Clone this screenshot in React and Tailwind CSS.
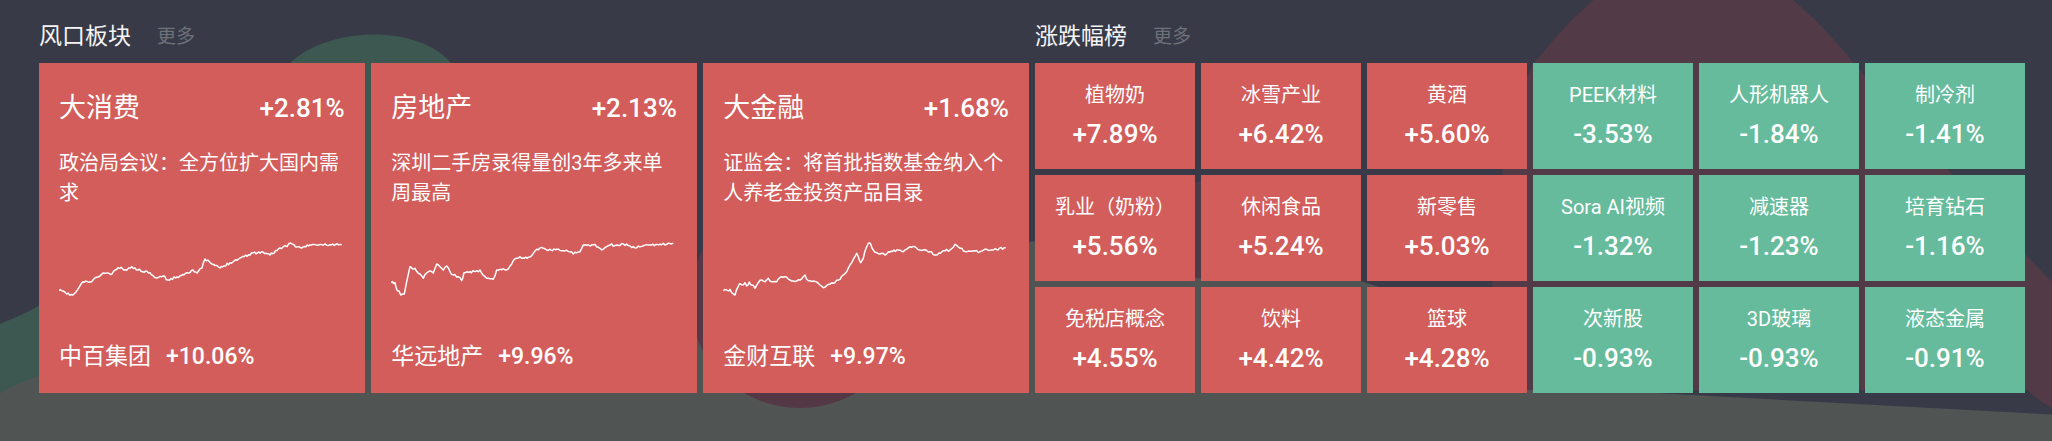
import React from 'react';

// sparkline anchor points, local to a 284x60 box
const lines = {
  a: [[0,50.7],[4,51],[7.7,54],[14,55],[17,52],[24,41.7],[31,42],[39,37],[44,33],[53,34],[59,27.7],[68,30],[73,26.7],[79,30],[91,32.7],[98,38],[104,36],[109,40],[118,37],[128,32.7],[134,30],[138,33],[143,28],[146,19],[153,24],[161,28],[171,22.7],[181,18],[194,13],[204,12],[211,15],[221,8],[228,6.7],[231.7,3],[238,7],[244,7],[251,5],[282.7,4.7]],
  b: [[0,42.7],[4,42.7],[6.3,50.7],[8,51],[9.7,55],[13.3,54],[15.7,41.7],[19,26.7],[21.7,29],[24,28.3],[27.3,33.3],[32.3,38.3],[35.7,33],[40.7,31.7],[42.3,33],[45.7,24],[49,26.7],[52.3,30],[55.7,26],[59,31.7],[62.3,35],[67.3,36.7],[70.7,40.7],[73,32.7],[79,31.7],[87.3,31.7],[89,30],[92,35],[95.7,38.3],[102.3,39.3],[105.7,30],[109,29.3],[115.7,30],[122.3,20.7],[129,16.7],[132,18],[137.3,17.3],[142.3,13.3],[145.7,9.3],[152.3,8.3],[155.7,10],[165.7,9.3],[172.3,10.7],[179,11.7],[182.3,14],[189,11.7],[192.3,5],[199,6],[202.3,4.7],[209,8.3],[212.3,9.3],[219,5],[225.7,5],[232.3,4],[239,6],[245.7,7.7],[252.3,5.7],[259,5],[269,4.3],[275.7,4.3],[282.3,3.3]],
  c: [[0.3,50.7],[6.3,50.7],[7,49.3],[8.7,52.7],[12,55],[16.3,44],[18.7,45],[22,42.7],[23.7,46],[26.3,42],[28.7,45],[32,48.3],[35.3,42.7],[38.7,40],[42,41.7],[45.3,38.3],[48.7,41.7],[53.7,41.7],[58.7,36.7],[63.7,37.3],[67,40],[70.3,41],[77,40],[82,35],[83.7,39.3],[90.3,41],[95.3,43.3],[100.3,47.7],[105.3,44.3],[110.3,43.3],[115.3,40],[120.3,35],[123.7,31.7],[127,25],[130.3,19.3],[133.7,13.3],[135.3,16.7],[137.7,22.7],[140.3,18.3],[143,8.3],[145.3,3.3],[147.7,4],[150.3,10],[153.7,12.7],[158.7,13.3],[162,15],[165.3,11.7],[173.7,10],[180.3,11.7],[187,6.7],[193.7,8.3],[200.3,10],[207,11.7],[213,15],[220.3,10.7],[227,10],[232,4.3],[237,8.3],[243.7,11.7],[250.3,10.7],[257,11.7],[263.7,9.3],[270.3,10],[282.7,7.7]],
};

// add a bit of jitter between anchors so it reads like tick data
const jag = (anchors, seed) => {
  let s = seed;
  const rnd = () => {
    s = (s * 16807) % 2147483647;
    return s / 2147483647;
  };
  const pts = [];
  for (let i = 0; i < anchors.length - 1; i++) {
    const [x0, y0] = anchors[i];
    const [x1, y1] = anchors[i + 1];
    const n = Math.max(1, Math.round((x1 - x0) / 1.5));
    for (let k = 0; k < n; k++) {
      const t = k / n;
      const dy = k === 0 ? 0 : (rnd() - 0.5) * 2.4;
      pts.push([x0 + (x1 - x0) * t, y0 + (y1 - y0) * t + dy]);
    }
  }
  pts.push(anchors[anchors.length - 1]);
  return 'M' + pts.map((p) => p[0].toFixed(1) + ' ' + p[1].toFixed(1)).join('L');
};

const sectors = [
  { name: '大消费', pct: '+2.81%', desc: '政治局会议：全方位扩大国内需求', stock: '中百集团', stockPct: '+10.06%', path: jag(lines.a, 11) },
  { name: '房地产', pct: '+2.13%', desc: '深圳二手房录得量创3年多来单周最高', stock: '华远地产', stockPct: '+9.96%', path: jag(lines.b, 29) },
  { name: '大金融', pct: '+1.68%', desc: '证监会：将首批指数基金纳入个人养老金投资产品目录', stock: '金财互联', stockPct: '+9.97%', path: jag(lines.c, 47) },
];

const tiles = [
  ['植物奶', '+7.89%'], ['冰雪产业', '+6.42%'], ['黄酒', '+5.60%'], ['PEEK材料', '-3.53%'], ['人形机器人', '-1.84%'], ['制冷剂', '-1.41%'],
  ['乳业（奶粉）', '+5.56%'], ['休闲食品', '+5.24%'], ['新零售', '+5.03%'], ['Sora AI视频', '-1.32%'], ['减速器', '-1.23%'], ['培育钻石', '-1.16%'],
  ['免税店概念', '+4.55%'], ['饮料', '+4.42%'], ['篮球', '+4.28%'], ['次新股', '-0.93%'], ['3D玻璃', '-0.93%'], ['液态金属', '-0.91%'],
];

const Heading = ({ title }) => (
  <div className="flex items-center pt-[22px] pb-[11px] leading-[30px]">
    <span className="text-[23px] text-[#f4f4f6]">{title}</span>
    <span className="ml-[26px] text-[19px] text-[#6e7179]">更多</span>
  </div>
);

const Backdrop = () => (
  <svg className="absolute inset-0" width="2052" height="441" viewBox="0 0 2052 441">
    <rect width="2052" height="441" fill="#383a47" />
    <path d="M-20 330 C100 300 220 140 290 63 C330 25 420 25 451 63 C560 170 640 300 690 400 L-20 400 Z" fill="#3d5751" />
    <path d="M-10 400 C30 370 150 330 370 360 C600 390 800 260 1050 240 C1250 225 1450 300 1600 390 L2060 415 L2060 441 L-10 441 Z" fill="#505452" />
    <ellipse cx="800" cy="300" rx="110" ry="108" fill="#553846" />
    <ellipse cx="1230" cy="230" rx="120" ry="50" fill="#4f3a47" />
    <path d="M1534 63 C1570 20 1620 -40 1690 -40 C1760 -40 1810 10 1854 63 C1930 150 2000 230 2060 290 L2060 412 C2045 405 2035 398 2028 390 L1500 390 C1480 300 1500 120 1534 63 Z" fill="#533a47" />
  </svg>
);

const SectorCard = ({ s }) => (
  <div className="flex flex-col bg-[#d25d5b] px-5 pt-[27px] pb-[21px] text-white">
    <div className="flex items-center justify-between leading-[36px]">
      <span className="text-[27px]">{s.name}</span>
      <span className="text-[26px] font-medium">{s.pct}</span>
    </div>
    <p className="mt-[22px] text-[20px] leading-[30px]">{s.desc}</p>
    <svg className="mt-[32px]" width="284" height="60" viewBox="0 0 284 60">
      <path d={s.path} fill="none" stroke="#fff" strokeWidth="1.5" strokeLinejoin="round" />
    </svg>
    <div className="mt-auto flex items-center text-[23px] leading-[30px]">
      <span>{s.stock}</span>
      <span className="ml-[15px] font-medium">{s.stockPct}</span>
    </div>
  </div>
);

const Tile = ({ name, pct }) => (
  <div
    className={
      'flex flex-col items-center justify-center text-white ' +
      (pct.startsWith('-') ? 'bg-[#65bb9b]' : 'bg-[#d25d5b]')
    }
  >
    <span className="text-[20px] leading-[28px]">{name}</span>
    <span className="mt-[8px] text-[26px] font-medium leading-[34px]">{pct}</span>
  </div>
);

export default function App() {
  return (
    <div className="relative h-[441px] w-[2052px] overflow-hidden bg-[#383a47] font-['Roboto','Noto_Sans_CJK_SC',sans-serif]">
      <Backdrop />
      <div className="relative flex gap-[6px] pl-[39px]">
        <section className="w-[990px]">
          <Heading title="风口板块" />
          <div className="grid h-[330px] grid-cols-3 gap-[6.5px]">
            {sectors.map((s) => (
              <SectorCard key={s.name} s={s} />
            ))}
          </div>
        </section>
        <section className="w-[990px]">
          <Heading title="涨跌幅榜" />
          <div className="grid h-[330px] grid-cols-6 grid-rows-3 gap-[6px]">
            {tiles.map(([name, pct]) => (
              <Tile key={name} name={name} pct={pct} />
            ))}
          </div>
        </section>
      </div>
    </div>
  );
}
